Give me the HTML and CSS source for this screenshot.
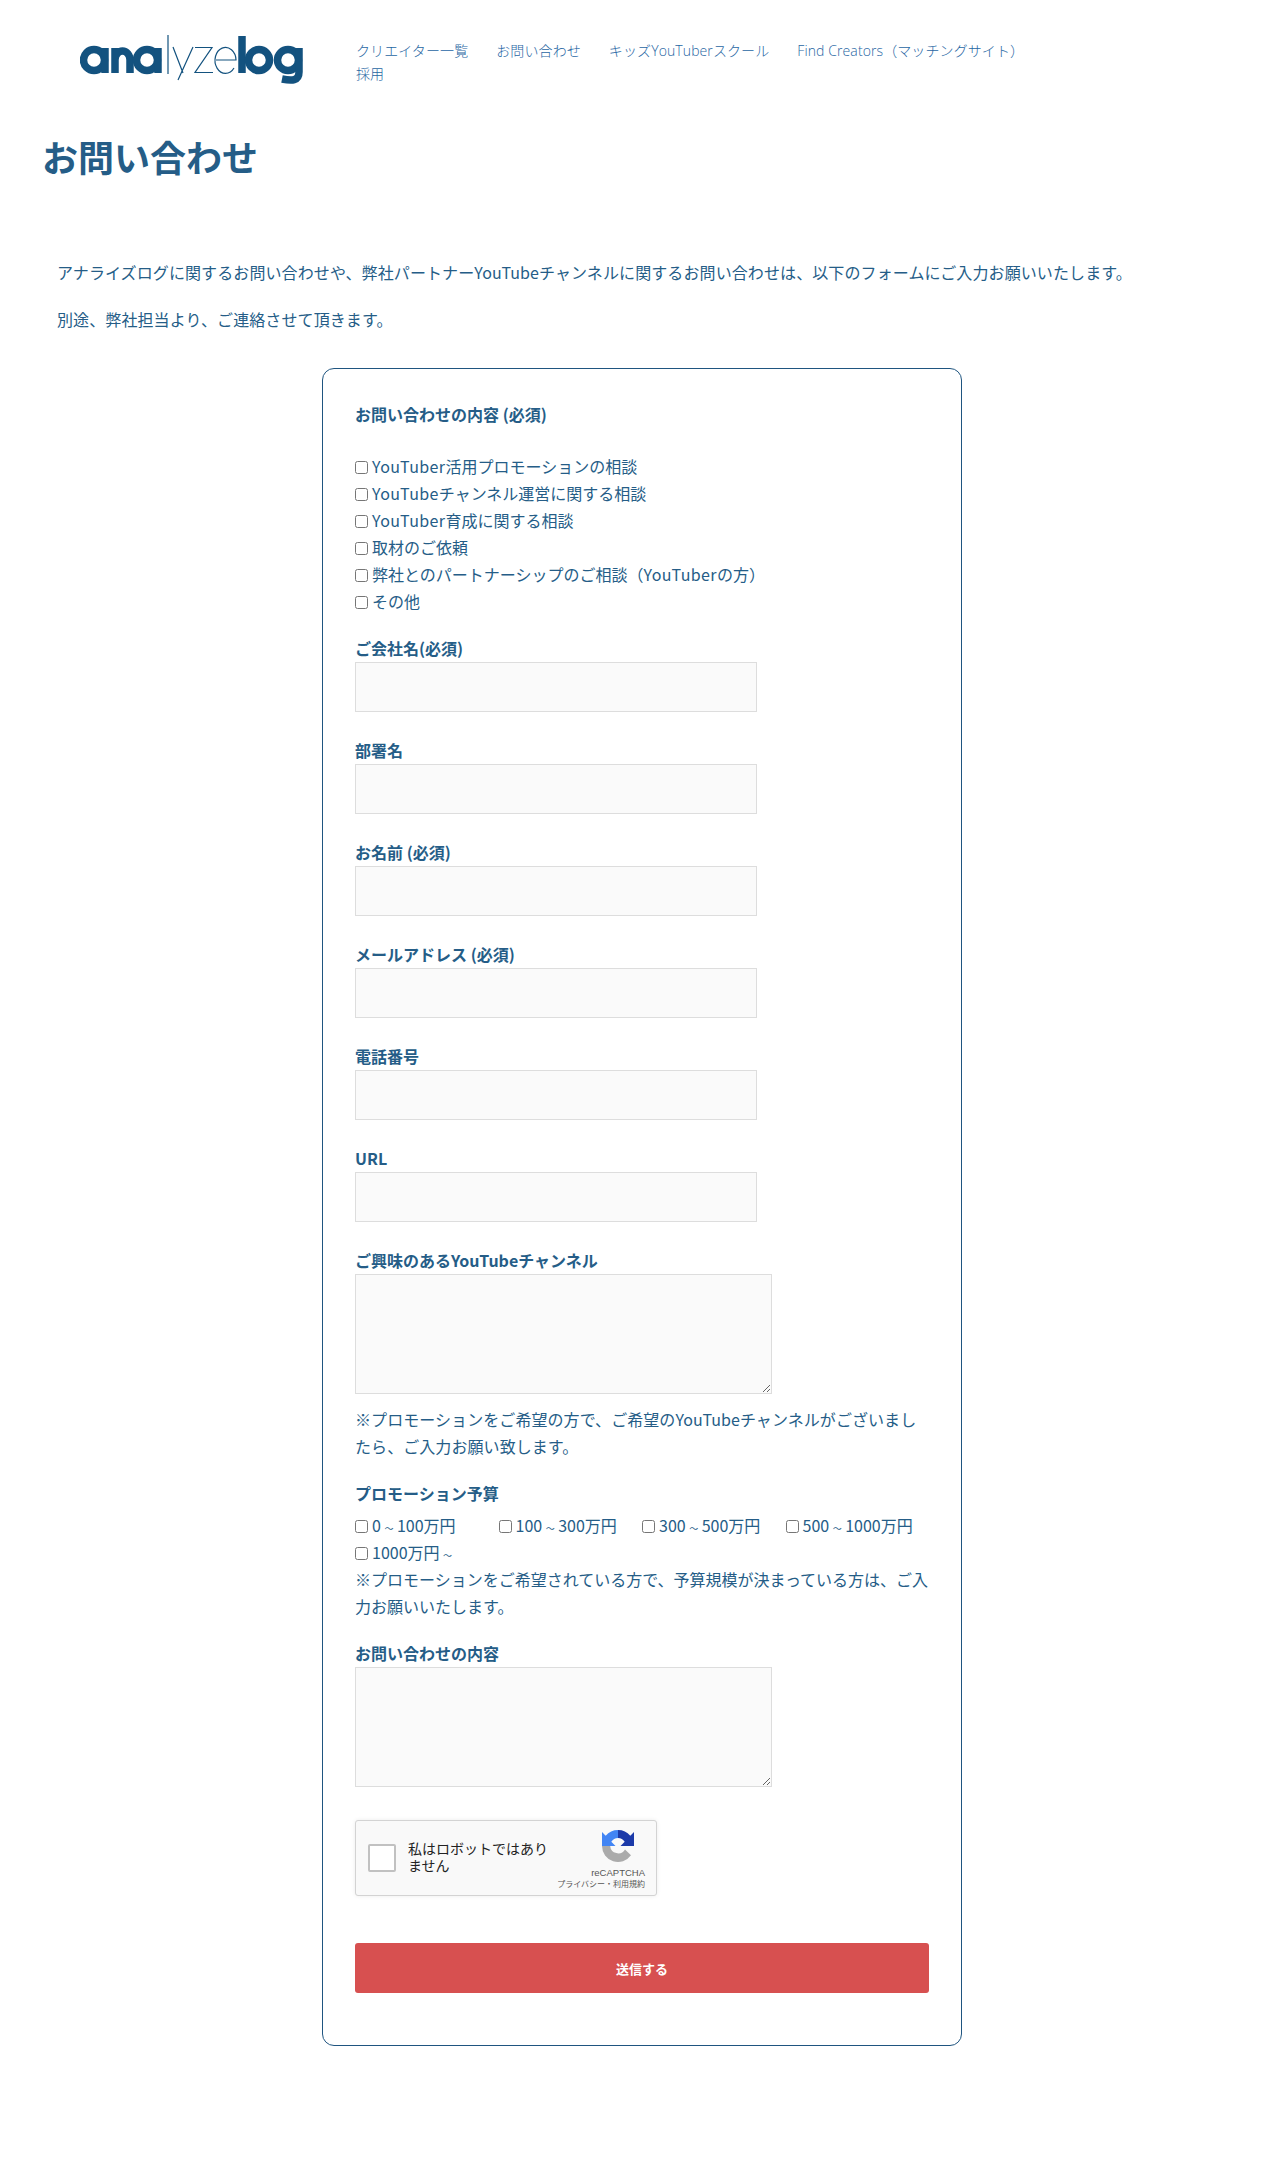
FILE: index.html
```html
<!DOCTYPE html>
<html lang="ja">
<head>
<meta charset="utf-8">
<title>お問い合わせ</title>
<link rel="stylesheet" href="styles.css">
</head>
<body>
<header class="site-header">
  <a class="logo" href="#" aria-label="analyzelog">
    <svg width="224" height="50" viewBox="80 35 224 50" fill="none" stroke="#13527f">
      <g stroke-width="7.500">
        <circle cx="94" cy="60" r="10.500"/><line x1="105" y1="48" x2="105" y2="73"/>
        <path d="M115 73V48M115 60a7.500 9 0 0 1 15 0V73"/>
        <circle cx="147" cy="60" r="10.500"/><line x1="158" y1="48" x2="158" y2="73"/>
      </g>
      <g stroke-width="1.200">
        <line x1="168" y1="35" x2="168" y2="74"/>
        <path d="M173 47L183 73M193 47L178 80"/>
        <path d="M195 47.500H212L195 72.500H213"/>
        <path d="M216 60H236A10.500 13 0 1 0 234 68"/>
      </g>
      <g stroke-width="7.500">
        <line x1="242" y1="36" x2="242" y2="73"/>
        <circle cx="259" cy="60" r="10.500"/>
        <circle cx="288" cy="60" r="10.500"/>
        <path d="M299 48V72C299 81 292 81 282 79"/>
      </g>
    </svg>
  </a>
  <nav class="nav">
    <a href="#">クリエイター一覧</a>
    <a href="#">お問い合わせ</a>
    <a href="#">キッズYouTuberスクール</a>
    <a href="#">Find Creators（マッチングサイト）</a>
    <a href="#">採用</a>
  </nav>
</header>

<main>
  <h1 class="title">お問い合わせ</h1>
  <div class="intro">
    <p>アナライズログに関するお問い合わせや、弊社パートナーYouTubeチャンネルに関するお問い合わせは、以下のフォームにご入力お願いいたします。</p>
    <p>別途、弊社担当より、ご連絡させて頂きます。</p>
  </div>

  <form class="form-box">
    <p class="head-label">お問い合わせの内容 (必須)</p>
    <div class="checks">
      <label class="check"><input type="checkbox"><span class="latin">YouTuber</span>活用プロモーションの相談</label>
      <label class="check"><input type="checkbox"><span class="latin">YouTube</span>チャンネル運営に関する相談</label>
      <label class="check"><input type="checkbox"><span class="latin">YouTuber</span>育成に関する相談</label>
      <label class="check"><input type="checkbox">取材のご依頼</label>
      <label class="check"><input type="checkbox">弊社とのパートナーシップのご相談（<span class="latin">YouTuber</span>の方）</label>
      <label class="check"><input type="checkbox">その他</label>
    </div>

    <div class="field"><label class="field-label">ご会社名(必須)</label><input class="text-input" type="text"></div>
    <div class="field"><label class="field-label">部署名</label><input class="text-input" type="text"></div>
    <div class="field"><label class="field-label">お名前 (必須)</label><input class="text-input" type="text"></div>
    <div class="field"><label class="field-label">メールアドレス (必須)</label><input class="text-input" type="text"></div>
    <div class="field"><label class="field-label">電話番号</label><input class="text-input" type="text"></div>
    <div class="field"><label class="field-label">URL</label><input class="text-input" type="text"></div>

    <div class="field">
      <label class="field-label">ご興味のあるYouTubeチャンネル</label>
      <textarea class="text-area"></textarea>
      <p class="note">※プロモーションをご希望の方で、ご希望のYouTubeチャンネルがございましたら、ご入力お願い致します。</p>
    </div>

    <div class="field field-tight">
      <label class="field-label budget-label">プロモーション予算</label>
      <div class="budget">
        <label class="budget-item"><input type="checkbox">0<span class="tilde">～</span>100万円</label>
        <label class="budget-item"><input type="checkbox">100<span class="tilde">～</span>300万円</label>
        <label class="budget-item"><input type="checkbox">300<span class="tilde">～</span>500万円</label>
        <label class="budget-item"><input type="checkbox">500<span class="tilde">～</span>1000万円</label>
        <label class="budget-item"><input type="checkbox">1000万円<span class="tilde">～</span></label>
      </div>
      <p class="note-tight">※プロモーションをご希望されている方で、予算規模が決まっている方は、ご入力お願いいたします。</p>
    </div>

    <div class="field field-tight">
      <label class="field-label">お問い合わせの内容</label>
      <textarea class="text-area"></textarea>
    </div>

    <div class="captcha">
      <span class="captcha-box"></span>
      <span class="captcha-text">私はロボットではありません</span>
      <span class="captcha-brand">
        <svg class="captcha-logo" width="32" height="32" viewBox="0 0 32 32">
          <path fill="#ababab" d="M0 16A16 16 0 0 0 29 25.300L23 19.500A8 8 0 0 1 8.200 16Z"/>
          <path fill="#1c3aa9" d="M16 0A16 16 0 0 1 28.300 5.800L32 2V16H18.500L22.700 11.800A8 8 0 0 0 16 8Z"/>
          <path fill="#4285f4" d="M16 0A16 16 0 0 0 3.700 5.800L0 2V16H13.500L9.300 11.800A8 8 0 0 1 16 8Z"/>
        </svg>
        <span class="captcha-name">reCAPTCHA</span>
        <span class="captcha-links">プライバシー・利用規約</span>
      </span>
    </div>

    <button class="submit" type="button">送信する</button>
  </form>
</main>
</body>
</html>
```

FILE: styles.css
```css
* { box-sizing: border-box; }

html, body { margin: 0; padding: 0; background: #fff; }

body {
  min-height: 2166px;
  color: #255d87;
  font-family: "Noto Sans CJK JP", "Noto Sans", sans-serif;
  font-size: 16px;
  line-height: 27px;
}

p { margin: 0; }

.site-header {
  display: flex;
  align-items: flex-start;
  padding: 35px 0 0 80px;
  height: 126px;
}

.logo { display: block; width: 224px; height: 50px; margin-right: 52px; flex: none; }
.logo svg { display: block; }

.nav {
  display: flex;
  flex-wrap: wrap;
  column-gap: 28px;
  width: 700px;
  padding-top: 4px;
  font-family: "Open Sans", "Noto Sans CJK JP", sans-serif;
  font-size: 14px;
  font-weight: 300;
  letter-spacing: 0.1px;
  line-height: 23px;
}

.nav a { color: #1f66a3; text-decoration: none; }

.title {
  margin: 0 0 0 42px;
  font-size: 36px;
  line-height: 60px;
  font-weight: 700;
}

.intro { margin: 73px 0 0 57px; letter-spacing: 0.1px; }
.intro p { margin-bottom: 20px; }
.intro p:last-child { margin-bottom: 35px; }

.latin { letter-spacing: 0.4px; }

.form-box {
  width: 640px;
  margin: 0 0 0 322px;
  padding: 32px 32px 52px;
  border: 1px solid #1f5580;
  border-radius: 12px;
}

.head-label { font-weight: 700; }

.checks { display: flex; flex-direction: column; margin-top: 25px; }

.check { display: block; height: 27px; }
.check input, .budget-item input { margin: 0 4px 0 0; width: 13px; height: 13px; vertical-align: -1px; }

.field { margin-top: 20px; }
.checks + .field { margin-top: 20px; }
.field + .field { margin-top: 25px; }
.field + .field-tight { margin-top: 20px; }

.field-label { display: block; font-weight: 700; height: 27px; line-height: 27px; }
.budget-label { height: 32px; }

.text-input {
  display: block;
  width: 402px;
  height: 50px;
  background: #fafafa;
  border: 1px solid #ddd;
  border-radius: 0;
}

.text-area {
  display: block;
  width: 417px;
  height: 120px;
  background: #fafafa;
  border: 1px solid #ddd;
  border-radius: 0;
}

.note { margin-top: 12px; letter-spacing: 0.07px; }

.budget { display: grid; grid-template-columns: repeat(4, 25%); }
.budget-item { display: block; height: 27px; white-space: nowrap; }
.tilde {
  display: inline-block;
  width: 16px;
  font-size: 9px;
  line-height: 1;
  text-align: center;
}

.captcha {
  display: flex;
  align-items: center;
  width: 302px;
  height: 76px;
  margin-top: 33px;
  background: #f9f9f9;
  border: 1px solid #d3d3d3;
  border-radius: 3px;
  box-shadow: 0 0 4px rgba(0, 0, 0, 0.08);
  color: #222;
  font-family: "Liberation Sans", "Noto Sans CJK JP", sans-serif;
}

.captcha-box {
  flex: none;
  width: 28px;
  height: 28px;
  margin-left: 12px;
  background: #fff;
  border: 2px solid #c1c1c1;
  border-radius: 2px;
}

.captcha-text {
  width: 150px;
  margin-left: 12px;
  font-size: 14px;
  line-height: 17px;
}

.captcha-brand {
  display: flex;
  flex-direction: column;
  align-items: flex-end;
  margin-left: auto;
  margin-right: 11px;
  padding-top: 4px;
}

.captcha-logo { display: block; margin: 0 11px 4px 0; }

.captcha-name { color: #555; font-size: 9.500px; line-height: 13px; }
.captcha-links { color: #555; font-size: 8px; line-height: 12px; white-space: nowrap; }

.submit {
  display: block;
  width: 574px;
  height: 50px;
  margin-top: 47px;
  background: #d75050;
  border: 0;
  border-radius: 3px;
  color: #fff;
  font-family: inherit;
  font-size: 13px;
  font-weight: 700;
}
```
